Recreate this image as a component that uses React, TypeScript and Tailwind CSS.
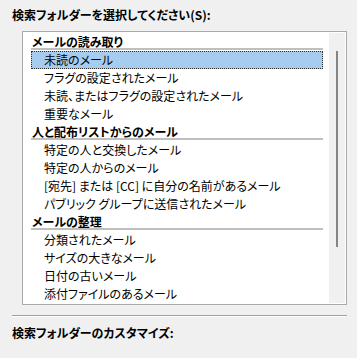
import React from 'react'

type Row = { kind: 'header' | 'item'; label: string; selected?: boolean }

const rows: Row[] = [
  { kind: 'header', label: 'メールの読み取り' },
  { kind: 'item', label: '未読のメール', selected: true },
  { kind: 'item', label: 'フラグの設定されたメール' },
  { kind: 'item', label: '未読、またはフラグの設定されたメール' },
  { kind: 'item', label: '重要なメール' },
  { kind: 'header', label: '人と配布リストからのメール' },
  { kind: 'item', label: '特定の人と交換したメール' },
  { kind: 'item', label: '特定の人からのメール' },
  { kind: 'item', label: '[宛先] または [CC] に自分の名前があるメール' },
  { kind: 'item', label: 'パブリック グループに送信されたメール' },
  { kind: 'header', label: 'メールの整理' },
  { kind: 'item', label: '分類されたメール' },
  { kind: 'item', label: 'サイズの大きなメール' },
  { kind: 'item', label: '日付の古いメール' },
  { kind: 'item', label: '添付ファイルのあるメール' },
]

function ListRow({ row }: { row: Row }) {
  if (row.kind === 'header') {
    return (
      <div className="h-[18px] ml-[7px] mr-[6px]">
        <div className="h-[15px] flex items-end pl-[1px]">
          <span className="font-bold leading-[12px]">{row.label}</span>
        </div>
        <div className="h-[2px] bg-[#bfbfbf]" />
      </div>
    )
  }
  return (
    <div
      className={
        row.selected
          ? 'h-[18px] ml-[7px] mr-[6px] pl-[12px] leading-[16px] bg-[#a6cdf0] border border-dotted border-[#303030]'
          : 'h-[18px] ml-[7px] mr-[6px] pl-[13px] leading-[18px]'
      }
    >
      {row.label}
    </div>
  )
}

export default function App() {
  return (
    <div
      className="w-[357px] h-[358px] bg-[#f0f0f0] text-black pl-[12px] pt-[6px] text-[12px] [font-feature-settings:'palt'] overflow-hidden"
      style={{ fontFamily: '"Noto Sans CJK JP", "Noto Sans", sans-serif' }}
    >
      <div className="h-[18px] leading-[18px] font-bold">検索フォルダーを選択してください(S):</div>

      {/* list box */}
      <div className="mt-[7px] ml-[10px] w-[325px] h-[274px] border border-[#a9a9a9] bg-white p-[1px] flex">
        <div className="flex-1 overflow-hidden">
          {rows.map((r, i) => (
            <ListRow key={i} row={r} />
          ))}
        </div>
        <div className="w-[16px] bg-[#f0f0f0] pl-[7px] pt-[18px]">
          <div className="w-[2px] h-[196px] bg-[#858585]" />
        </div>
      </div>

      <div className="mt-[10px] w-[335px] border-t border-t-[#a0a0a0] border-b border-b-white" />

      <div className="mt-[7px] h-[18px] leading-[18px] font-bold">検索フォルダーのカスタマイズ:</div>
    </div>
  )
}
